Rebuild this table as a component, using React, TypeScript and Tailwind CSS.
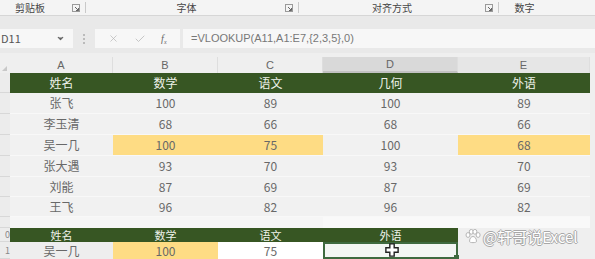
import { ChevronDown, X, Check } from "lucide-react";

const font = { fontFamily: '"Noto Sans CJK SC", "Noto Sans", sans-serif' };

const cols = [
  { key: "A", w: "w-[103px]" },
  { key: "B", w: "w-[105px]" },
  { key: "C", w: "w-[105px]" },
  { key: "D", w: "w-[135px]" },
  { key: "E", w: "w-[132px]" },
];

const headers = ["姓名", "数学", "语文", "几何", "外语"];

const rows = [
  { h: "h-[21px]", cells: ["张飞", "100", "89", "100", "89"] },
  { h: "h-[21px]", cells: ["李玉清", "68", "66", "68", "66"] },
  { h: "h-[21px]", cells: ["吴一几", "100", "75", "100", "68"], hl: [1, 2, 4] },
  { h: "h-[21px]", cells: ["张大遇", "93", "70", "93", "70"] },
  { h: "h-[20px]", cells: ["刘能", "87", "69", "87", "69"] },
  { h: "h-[20px]", cells: ["王飞", "96", "82", "96", "82"] },
];

function Launcher() {
  return (
    <span className="flex items-center gap-[5px]">
      <svg width="8" height="8" viewBox="0 0 8 8">
        <rect x="0.5" y="0.5" width="7" height="7" fill="none" stroke="#9a9a9a" />
        <path d="M3 3 L6.5 6.5 M6.5 4 V6.5 H4" stroke="#666" fill="none" />
      </svg>
      <span className="h-[11px] w-px bg-[#c9c9c9]" />
    </span>
  );
}

function Ribbon() {
  return (
    <div className="h-[16px] bg-[#f4f4f4] border-b border-[#d6d6d6] flex text-[10px] text-[#444] leading-none items-center">
      <div className="w-[88px] flex items-center">
        <span className="pl-[15px] w-[72px]">剪贴板</span>
        <Launcher />
      </div>
      <div className="w-[211px] flex items-center">
        <span className="flex-1 text-center">字体</span>
        <Launcher />
      </div>
      <div className="w-[200px] flex items-center">
        <span className="flex-1 text-center">对齐方式</span>
        <Launcher />
      </div>
      <div className="flex-1 text-center pr-[45px]">数字</div>
    </div>
  );
}

function FormulaBar() {
  return (
    <div className="bg-[#e9e9e9] pt-[12px] pb-[4px] flex items-center h-[37px]">
      <div className="w-[73px] h-[19px] bg-[#f7f7f7] flex items-center justify-between pr-[8px] text-[11px] text-[#555] overflow-hidden">
        <span className="pl-[1px]">D11</span>
        <ChevronDown size={9} strokeWidth={3} className="text-[#666]" fill="#666" />
      </div>
      <div className="w-[22px] flex justify-center">
        <span className="flex flex-col gap-[2px]">
          <span className="w-[2px] h-[2px] bg-[#bbb]" />
          <span className="w-[2px] h-[2px] bg-[#bbb]" />
          <span className="w-[2px] h-[2px] bg-[#bbb]" />
        </span>
      </div>
      <div className="w-[85px] h-[19px] bg-[#f7f7f7] flex items-center justify-around px-[6px] text-[#b5b5b5]">
        <X size={11} strokeWidth={1.5} />
        <Check size={12} strokeWidth={1.5} />
        <span className="text-[10px] italic text-[#666]" style={{ fontFamily: '"Liberation Serif", serif' }}>
          f<sub className="text-[6px]">x</sub>
        </span>
      </div>
      <div className="ml-[3px] flex-1 h-[19px] bg-[#f7f7f7] flex items-center pl-[8px] text-[11px] text-[#777]" style={{ fontFamily: '"Liberation Sans", sans-serif' }}>
        =VLOOKUP(A11,A1:E7,{"{"}2,3,5{"}"},0)
      </div>
    </div>
  );
}

function ColumnHeaders() {
  return (
    <div className="h-[16px] flex bg-[#efefef] text-[11px] text-[#666] leading-none mt-[4px]">
      <div className="w-[10px] flex items-end pb-[2px] pl-[2px]">
        <span className="w-0 h-0 border-l-[5px] border-l-transparent border-b-[5px] border-b-[#c8c8c8]" />
      </div>
      {cols.map((c) => (
        <div
          key={c.key}
          className={`${c.w} flex items-center justify-center border-r border-[#dedede] ${
            c.key === "D" ? "bg-[#d9d9d9] border-b-2 border-b-[#c2c2c2]" : c.key === "E" ? "bg-[#e6e6e6]" : ""
          }`}
          style={{ fontFamily: '"Liberation Sans", sans-serif' }}
        >
          {c.key}
        </div>
      ))}
    </div>
  );
}

function RowGutter({ h, label }: { h: string; label?: string }) {
  return (
    <div className={`w-[10px] ${h} border-b border-[#d8d8d8] bg-[#ececec] text-[9px] leading-none text-[#888] overflow-hidden flex items-center justify-end`}>
      {label}
    </div>
  );
}

export default function App() {
  return (
    <div className="w-[595px] h-[259px] bg-[#efefef] overflow-hidden" style={font}>
      <Ribbon />
      <FormulaBar />
      <ColumnHeaders />

      <div className="flex h-[20px]">
        <RowGutter h="h-[20px]" />
        <div className="w-[580px] bg-[#375623] flex text-[12px] text-[#eef2ea]">
          {cols.map((c, i) => (
            <div key={c.key} className={`${c.w} flex items-center justify-center`}>
              {headers[i]}
            </div>
          ))}
        </div>
      </div>

      {rows.map((r, ri) => (
        <div key={ri} className={`flex ${r.h}`}>
          <RowGutter h={r.h} />
          <div className="flex text-[12px] text-[#686868] bg-[#f1f1f1] border-b border-[#f8f8f8]">
            {cols.map((c, i) => (
              <div
                key={c.key}
                className={`${c.w} flex items-center justify-center ${r.hl?.includes(i) ? "bg-[#fedc84]" : ""}`}
              >
                {r.cells[i]}
              </div>
            ))}
          </div>
        </div>
      ))}

      <div className="flex h-[11px]">
        <RowGutter h="h-[11px]" />
        <div className="w-[313px] bg-[#f6f6f6]" />
        <div className="w-[267px] bg-[#f9f9f9]" />
      </div>

      <div className="flex h-[14px]">
        <RowGutter h="h-[14px]" label="0" />
        <div className="w-[448px] bg-[#375623] flex text-[11px] text-[#eef2ea] leading-[14px]">
          {["姓名", "数学", "语文", "外语"].map((t, i) => (
            <div key={t} className={`${cols[i].w} text-center`}>
              {t}
            </div>
          ))}
        </div>
      </div>

      <div className="flex h-[17px] relative text-[12px] leading-none text-[#686868]">
        <RowGutter h="h-[17px]" label="1" />
        <div className="w-[103px] bg-[#eeeeee] flex items-center justify-center">吴一几</div>
        <div className="w-[105px] bg-[#fedc84] flex items-center justify-center">100</div>
        <div className="w-[105px] bg-white flex items-center justify-center">75</div>
        <div className="w-[135px] bg-[#f3f6f3] border-2 border-[#3f6a3f] relative">
          <span className="absolute right-[-3px] bottom-[-3px] w-[5px] h-[5px] bg-[#3f6a3f]" />
          <svg className="absolute left-[60px] -top-[1px]" width="14" height="14" viewBox="0 0 16 16">
            <path
              d="M5.5 1 H10.5 V5.5 H15 V10.5 H10.5 V15 H5.5 V10.5 H1 V5.5 H5.5 Z"
              fill="white"
              stroke="#222"
              strokeWidth="1.6"
            />
          </svg>
        </div>
        <div className="absolute left-[465px] -top-[13px] flex items-center gap-[2px]">
          <svg width="16" height="15" viewBox="0 0 16 15">
            <g fill="white" stroke="#b5b5b5" strokeWidth="1">
              <ellipse cx="3" cy="6" rx="2" ry="2.4" />
              <ellipse cx="6.3" cy="2.8" rx="2" ry="2.4" />
              <ellipse cx="9.9" cy="2.8" rx="2" ry="2.4" />
              <ellipse cx="13.1" cy="6" rx="2" ry="2.4" />
              <path d="M4.5 12.5 C4.5 9 6.5 7.5 8 7.5 C9.5 7.5 11.5 9 11.5 12.5 C11.5 14 4.5 14 4.5 12.5 Z" />
            </g>
          </svg>
          <span
            className="text-[15px] text-white leading-none"
            style={{
              textShadow:
                "1px 0 0 #a8a8a8, -1px 0 0 #a8a8a8, 0 1px 0 #a8a8a8, 0 -1px 0 #a8a8a8",
            }}
          >
            @轩哥说Excel
          </span>
        </div>
      </div>
    </div>
  );
}
